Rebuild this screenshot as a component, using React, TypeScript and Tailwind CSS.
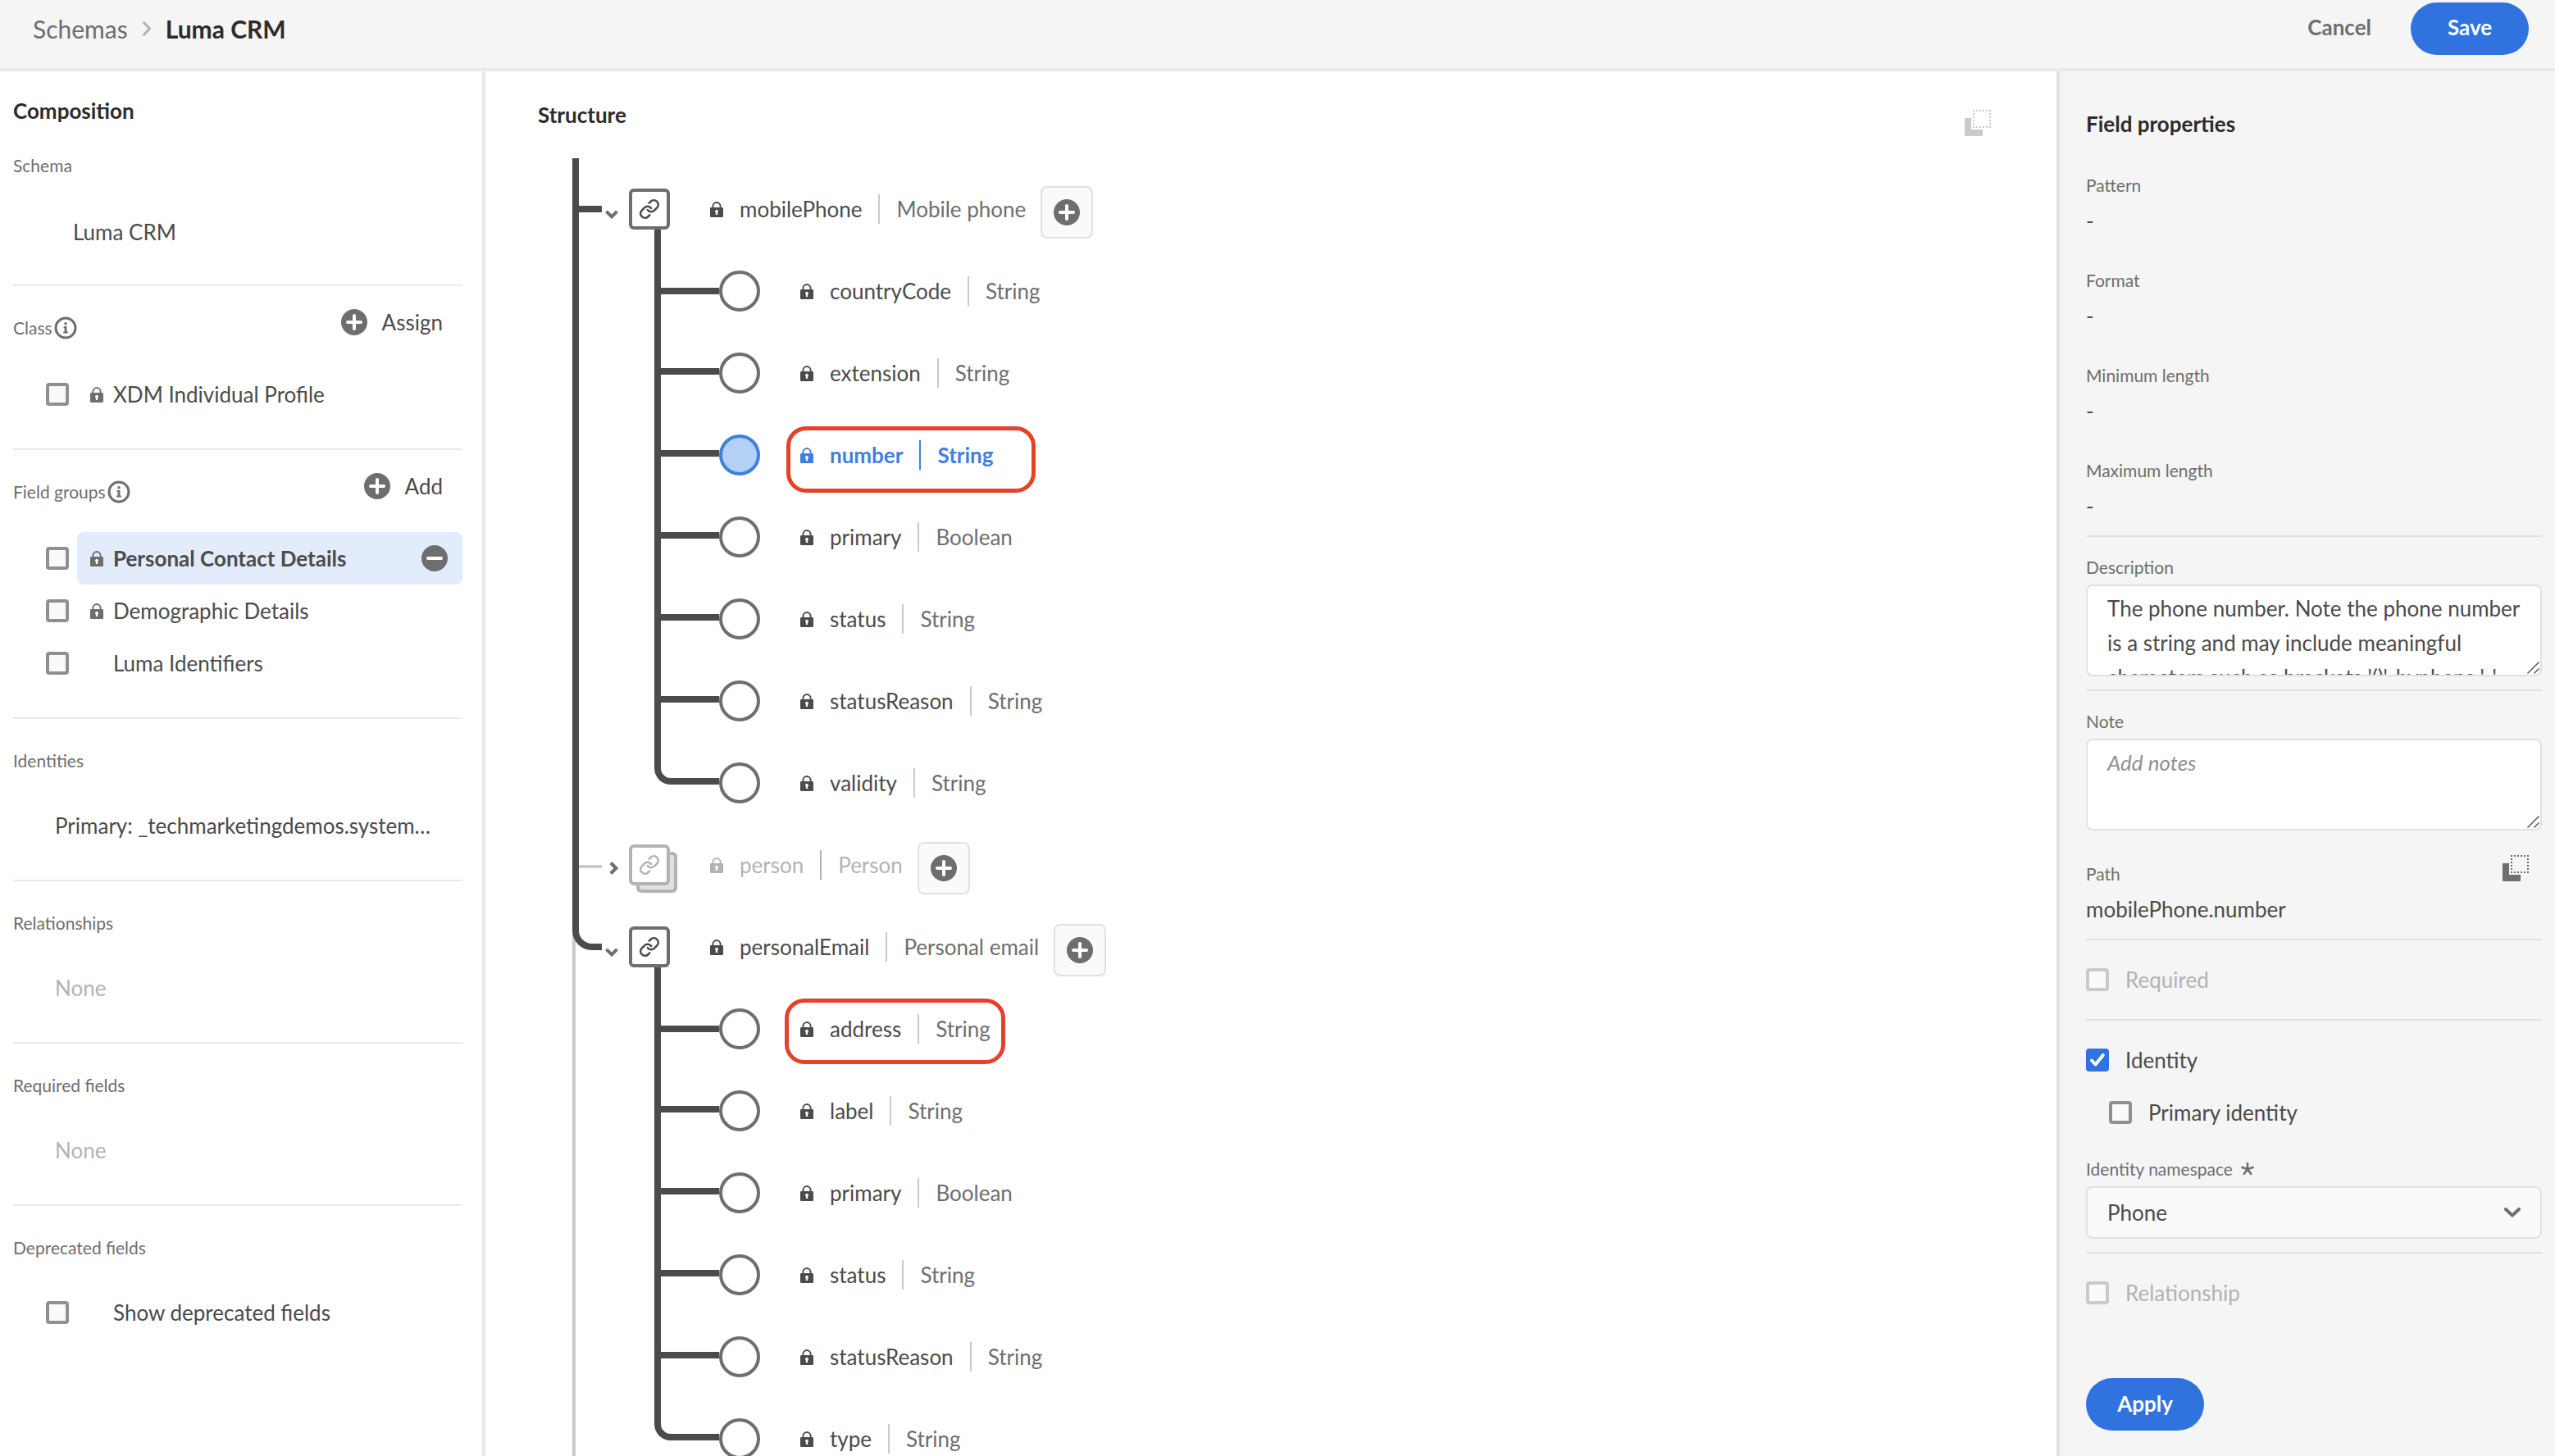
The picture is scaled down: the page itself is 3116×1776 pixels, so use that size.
import { useState, type ReactNode } from "react";
import { Link as LinkIcon } from "lucide-react";

/* ---------- icons ---------- */

function LockIcon({ className }: { className?: string }) {
  return (
    <svg aria-hidden="true" viewBox="0 0 16 19" className={`h-[19px] w-4 shrink-0 ${className ?? ""}`}>
      <path d="M3.4 8.5V5.6a4.6 4.6 0 0 1 9.2 0v2.9" fill="none" stroke="currentColor" strokeWidth="1.9" />
      <rect x="0" y="7" width="16" height="12" rx="1.2" fill="currentColor" />
      <path d="M8 9.8a2 2 0 0 1 1.1 3.6v2.7H6.9v-2.7A2 2 0 0 1 8 9.8Z" fill="#fff" />
    </svg>
  );
}

function PlusCircle() {
  return (
    <svg aria-hidden="true" viewBox="0 0 32 32" className="size-8 shrink-0">
      <circle cx="16" cy="16" r="16" fill="#6e6e6e" />
      <path d="M16 8v16M8 16h16" stroke="#fff" strokeWidth="4" strokeLinecap="round" />
    </svg>
  );
}

function MinusCircle() {
  return (
    <svg aria-hidden="true" viewBox="0 0 32 32" className="size-8 shrink-0">
      <circle cx="16" cy="16" r="16" fill="#6e6e6e" />
      <path d="M8 16h16" stroke="#fff" strokeWidth="4" strokeLinecap="round" />
    </svg>
  );
}

function InfoIcon() {
  return (
    <svg aria-hidden="true" viewBox="0 0 28 28" className="size-7 shrink-0">
      <circle cx="14" cy="14" r="12" fill="none" stroke="#6e6e6e" strokeWidth="3" />
      <circle cx="14" cy="8.8" r="1.7" fill="#6e6e6e" />
      <path d="M11.6 12h3.8v6.4h1.4v2h-5.6v-2h1.4V14h-1Z" fill="#6e6e6e" />
    </svg>
  );
}

function CopyIcon() {
  return (
    <svg aria-hidden="true" viewBox="0 0 32 32" className="size-8">
      <path d="M1 10h7v14h14v7a1 1 0 0 1-1 1H1a1 1 0 0 1-1-1V11a1 1 0 0 1 1-1Z" fill="currentColor" />
      <path
        d="M10 1h22M10 21h22M11 0v22M31 0v22"
        fill="none"
        stroke="currentColor"
        strokeWidth="2"
        strokeDasharray="2 2"
      />
    </svg>
  );
}

function ChevronSmall({ open }: { open: boolean }) {
  return open ? (
    <svg aria-hidden="true" viewBox="0 0 16 11" className="h-[11px] w-4">
      <path d="M1.5 1.8 8 8.3l6.5-6.5" fill="none" stroke="#6e6e6e" strokeWidth="4" />
    </svg>
  ) : (
    <svg aria-hidden="true" viewBox="0 0 11 16" className="h-4 w-[11px]">
      <path d="M1.8 1.5 8.3 8l-6.5 6.5" fill="none" stroke="#6e6e6e" strokeWidth="4" />
    </svg>
  );
}

function Asterisk() {
  return (
    <svg aria-hidden="true" viewBox="0 0 16 16" className="size-4">
      <path
        d="M8 8V1M8 8 1.4 5.9M8 8l6.6-2.1M8 8l-4.1 5.8M8 8l4.1 5.8"
        stroke="#6e6e6e"
        strokeWidth="2.6"
        strokeLinecap="round"
      />
    </svg>
  );
}

/* ---------- shared controls ---------- */

function Checkbox({
  label,
  defaultChecked = false,
  disabled = false,
}: {
  label?: string;
  defaultChecked?: boolean;
  disabled?: boolean;
}) {
  return (
    <span className="grid size-7 shrink-0">
      <input
        type="checkbox"
        aria-label={label}
        defaultChecked={defaultChecked}
        disabled={disabled}
        className="peer col-start-1 row-start-1 size-7 appearance-none rounded border-4 border-[#909090] bg-[#fafafa] checked:border-[#3073de] checked:bg-[#3073de] disabled:border-[#cacaca]"
      />
      <svg
        aria-hidden="true"
        viewBox="0 0 28 28"
        className="pointer-events-none col-start-1 row-start-1 hidden size-7 peer-checked:block"
      >
        <path d="m7 14.5 4.6 5L20.8 8" fill="none" stroke="#fff" strokeWidth="4" strokeLinecap="round" strokeLinejoin="round" />
      </svg>
    </span>
  );
}

/* ---------- composition panel ---------- */

function Section({
  title,
  info,
  action,
  first,
  children,
}: {
  title: string;
  info?: boolean;
  action?: string;
  first?: boolean;
  children: ReactNode;
}) {
  return (
    <section className={first ? "pb-8" : "border-t-2 border-[#eaeaea] pb-[34px]"}>
      <div
        className={
          action || first ? "flex h-[100px] items-start justify-between" : "flex h-[98px] items-start"
        }
      >
        <h3 className="flex items-center gap-0.5 pt-[35px] text-[21px] leading-8 text-[#6e6e6e]">
          {title}
          {info && (
            <button type="button" aria-label={`About ${title}`}>
              <InfoIcon />
            </button>
          )}
        </h3>
        {action && (
          <button type="button" className="mt-3 flex h-16 items-center gap-[18px] pr-6 text-[#4b4b4b]">
            <PlusCircle />
            {action}
          </button>
        )}
      </div>
      {children}
    </section>
  );
}

function CheckRow({ name, locked, selected }: { name: string; locked?: boolean; selected?: boolean }) {
  return (
    <li className="flex h-16 items-center gap-[10px] pl-10">
      <Checkbox label={name} />
      <div
        className={
          selected
            ? "flex h-16 flex-1 items-center gap-3 rounded-lg bg-[#e3ecfb] pr-[18px] pl-4 font-bold"
            : "flex h-16 flex-1 items-center gap-3 pl-4"
        }
      >
        {locked ? <LockIcon className="text-[#6e6e6e]" /> : <span className="w-4" />}
        <span className="flex-1">{name}</span>
        {selected && (
          <button type="button" aria-label={`Remove ${name}`}>
            <MinusCircle />
          </button>
        )}
      </div>
    </li>
  );
}

function CompositionPanel() {
  return (
    <aside className="w-[592px] shrink-0 border-r-4 border-[#eaeaea] bg-white pr-6 pl-4 text-[#4b4b4b]">
      <h2 className="h-16 pt-8 leading-8 font-bold text-[#2c2c2c]">Composition</h2>
      <Section title="Schema" first>
        <p className="flex h-16 items-center pl-[73px]">Luma CRM</p>
      </Section>
      <Section title="Class" info action="Assign">
        <ul>
          <CheckRow name="XDM Individual Profile" locked />
        </ul>
      </Section>
      <Section title="Field groups" info action="Add">
        <ul>
          <CheckRow name="Personal Contact Details" locked selected />
          <CheckRow name="Demographic Details" locked />
          <CheckRow name="Luma Identifiers" />
        </ul>
      </Section>
      <Section title="Identities">
        <p className="flex h-16 items-center pl-[51px]">Primary: _techmarketingdemos.system…</p>
      </Section>
      <Section title="Relationships">
        <p className="flex h-16 items-center pl-[51px] text-[#b3b3b3]">None</p>
      </Section>
      <Section title="Required fields">
        <p className="flex h-16 items-center pl-[51px] text-[#b3b3b3]">None</p>
      </Section>
      <Section title="Deprecated fields">
        <ul>
          <CheckRow name="Show deprecated fields" />
        </ul>
      </Section>
    </aside>
  );
}

/* ---------- structure tree ---------- */

type Field = { name: string; type: string; selected?: boolean; outline?: string };
type Group = { name: string; type: string; dimmed?: boolean; last?: boolean; fields: Field[] };

const groups: Group[] = [
  {
    name: "mobilePhone",
    type: "Mobile phone",
    fields: [
      { name: "countryCode", type: "String" },
      { name: "extension", type: "String" },
      {
        name: "number",
        type: "String",
        selected: true,
        outline: "-top-[17px] -left-[17px] h-[81px] w-[304px]",
      },
      { name: "primary", type: "Boolean" },
      { name: "status", type: "String" },
      { name: "statusReason", type: "String" },
      { name: "validity", type: "String" },
    ],
  },
  { name: "person", type: "Person", dimmed: true, fields: [] },
  {
    name: "personalEmail",
    type: "Personal email",
    last: true,
    fields: [
      { name: "address", type: "String", outline: "-top-[19px] -left-[19px] h-20 w-[269px]" },
      { name: "label", type: "String" },
      { name: "primary", type: "Boolean" },
      { name: "status", type: "String" },
      { name: "statusReason", type: "String" },
      { name: "type", type: "String" },
    ],
  },
];

function FieldRow({ field, first, last }: { field: Field; first: boolean; last: boolean }) {
  return (
    <li className="flex h-[100px] items-center">
      <div className="flex w-[79px] flex-col self-stretch">
        <div
          className={
            first
              ? "h-[54px] border-b-8 border-l-8 border-[#4b4b4b]"
              : last
                ? "h-[52px] rounded-bl-[20px] border-b-8 border-l-8 border-[#4b4b4b]"
                : "h-[52px] border-b-8 border-l-8 border-[#4b4b4b]"
          }
        />
        {!last && <div className="w-2 flex-1 bg-[#4b4b4b]" />}
      </div>
      <button
        type="button"
        aria-label={`Select ${field.name}`}
        className={
          field.selected
            ? "size-[50px] rounded-full border-4 border-[#3f7fe0] bg-[#b5d0f5]"
            : "size-[50px] rounded-full border-4 border-[#6e6e6e] bg-white"
        }
      />
      <div
        className={
          field.selected
            ? "relative ml-[49px] flex h-9 items-center font-bold text-[#3f7fe0]"
            : "relative ml-[49px] flex h-9 items-center text-[#4b4b4b]"
        }
      >
        <LockIcon />
        <span className="pl-5">{field.name}</span>
        <span className={field.selected ? "ml-5 h-9 w-0.5 bg-[#3f7fe0]" : "ml-5 h-9 w-0.5 bg-[#cacaca]"} />
        <span className={field.selected ? "pl-5" : "pl-5 text-[#6e6e6e]"}>{field.type}</span>
        {field.outline && (
          <span
            className={`pointer-events-none absolute rounded-[24px] border-[5px] border-[#e34328] ${field.outline}`}
          />
        )}
      </div>
    </li>
  );
}

function GroupNode({ group }: { group: Group }) {
  const { name, type, dimmed, last, fields } = group;
  const open = fields.length > 0;
  return (
    <li className="flex">
      <div className={last ? "w-9 shrink-0 border-l-4 border-[#cacaca]" : "flex w-9 shrink-0 flex-col"}>
        {dimmed ? (
          <div className="flex h-[100px] border-l-8 border-[#4b4b4b]">
            <div className="h-[54px] flex-1 border-b-4 border-[#cacaca]" />
          </div>
        ) : (
          <div
            className={
              last
                ? "-ml-1 h-[54px] rounded-bl-[24px] border-b-8 border-l-8 border-[#4b4b4b]"
                : "h-[54px] border-b-8 border-l-8 border-[#4b4b4b]"
            }
          />
        )}
        {!dimmed && !last && <div className="w-2 flex-1 bg-[#4b4b4b]" />}
      </div>
      <div>
        <div className="flex h-[100px] items-center">
          <button
            type="button"
            aria-expanded={open}
            aria-label={`Toggle ${name}`}
            className={open ? "mt-3 w-[33px] pl-1" : "mt-2 w-[33px] pl-[9px]"}
          >
            <ChevronSmall open={open} />
          </button>
          <div className="flex h-[100px] flex-col pt-[25px]">
            <div
              className={
                dimmed
                  ? "grid size-[50px] shrink-0 place-items-center rounded-md border-4 border-[#b3b3b3] bg-white text-[#b3b3b3] shadow-[9px_9px_0_-4px_#e1e1e1,9px_9px_0_0_#b3b3b3]"
                  : "grid size-[50px] shrink-0 place-items-center rounded-md border-4 border-[#6e6e6e] bg-white text-[#4b4b4b]"
              }
            >
              <LinkIcon size={26} strokeWidth={2.4} />
            </div>
            {open && <div className="ml-[31px] w-2 flex-1 bg-[#4b4b4b]" />}
          </div>
          <div
            className={
              dimmed
                ? "ml-[49px] flex items-center text-[#b3b3b3]"
                : "ml-[49px] flex items-center text-[#4b4b4b]"
            }
          >
            <LockIcon />
            <span className="pl-5">{name}</span>
            <span className={dimmed ? "ml-5 h-9 w-0.5 bg-[#b3b3b3]" : "ml-5 h-9 w-0.5 bg-[#cacaca]"} />
            <span className={dimmed ? "pl-5" : "pl-5 text-[#6e6e6e]"}>{type}</span>
          </div>
          <button
            type="button"
            aria-label={`Add field to ${name}`}
            className="mt-2 ml-[18px] grid size-16 place-items-center rounded-lg border-2 border-[#e1e1e1] bg-[#fafafa]"
          >
            <PlusCircle />
          </button>
        </div>
        {open && (
          <ul className="ml-16">
            {fields.map((f, i) => (
              <FieldRow key={f.name} field={f} first={i === 0} last={i === fields.length - 1} />
            ))}
          </ul>
        )}
      </div>
    </li>
  );
}

function StructurePanel() {
  return (
    <main className="min-w-0 flex-1 overflow-hidden bg-white">
      <div className="flex h-[106px] items-center justify-between pr-20 pl-16">
        <h2 className="leading-8 font-bold text-[#2c2c2c]">Structure</h2>
        <button type="button" aria-label="Copy structure" disabled className="pt-5 text-[#cacaca]">
          <CopyIcon />
        </button>
      </div>
      <div className="pl-[106px]">
        <div className="h-3 w-2 bg-[#4b4b4b]" />
        <ul>
          {groups.map((g) => (
            <GroupNode key={g.name} group={g} />
          ))}
        </ul>
      </div>
    </main>
  );
}

/* ---------- field properties panel ---------- */

const readOnly = ["Pattern", "Format", "Minimum length", "Maximum length"];

const labelClass = "block text-[21px] leading-[34px] text-[#6e6e6e]";

function Rule({ className }: { className?: string }) {
  return <hr className={`border-t-2 border-[#e1e1e1] ${className ?? ""}`} />;
}

function TextArea({ id, value, placeholder }: { id: string; value?: string; placeholder?: string }) {
  return (
    <div className="relative mt-1">
      <textarea
        id={id}
        defaultValue={value}
        placeholder={placeholder}
        className="block h-28 w-full resize-none overflow-hidden rounded-lg border-2 border-[#e1e1e1] bg-white py-1.5 pr-5 pl-6 leading-[42px] text-[#4b4b4b] placeholder:text-[#909090] placeholder:italic"
      />
      <svg
        aria-hidden="true"
        viewBox="0 0 15 15"
        className="pointer-events-none absolute right-[3px] bottom-[3px] size-[15px]"
      >
        <path d="M.5 14.5 14.5.5M8.5 14.5l6-6" fill="none" stroke="#4b4b4b" strokeWidth="1.4" />
      </svg>
    </div>
  );
}

function PropertiesPanel() {
  const [namespace, setNamespace] = useState("Phone");
  return (
    <aside className="w-[608px] shrink-0 border-l-4 border-[#e1e1e1] bg-[#f5f5f5] pt-12 pr-4 pl-8 text-[#4b4b4b]">
      <h2 className="leading-8 font-bold text-[#2c2c2c]">Field properties</h2>
      <dl className="mt-[42px] flex flex-col gap-[30px]">
        {readOnly.map((l) => (
          <div key={l}>
            <dt className={labelClass}>{l}</dt>
            <dd className="leading-[52px]">-</dd>
          </div>
        ))}
      </dl>
      <Rule className="mt-2.5 mb-5" />
      <label htmlFor="description" className={labelClass}>
        Description
      </label>
      <TextArea
        id="description"
        value="The phone number. Note the phone number is a string and may include meaningful characters such as brackets '()', hyphens '-', or symbols like '+'."
      />
      <Rule className="mt-4 mb-5" />
      <label htmlFor="note" className={labelClass}>
        Note
      </label>
      <TextArea id="note" placeholder="Add notes" />
      <div className="mt-9 flex items-start justify-between pr-4">
        <div>
          <p className={labelClass}>Path</p>
          <p className="leading-[52px]">mobilePhone.number</p>
        </div>
        <button type="button" aria-label="Copy path" className="-mt-1.5 text-[#6e6e6e]">
          <CopyIcon />
        </button>
      </div>
      <Rule className="mt-2.5 mb-4" />
      <label className="flex h-16 items-center gap-5 text-[#b3b3b3]">
        <Checkbox disabled />
        Required
      </label>
      <Rule className="my-4" />
      <label className="flex h-16 items-center gap-5">
        <Checkbox defaultChecked />
        Identity
      </label>
      <label className="ml-7 flex h-16 items-center gap-5">
        <Checkbox />
        Primary identity
      </label>
      <label htmlFor="namespace" className="mt-5 flex items-center gap-2.5 text-[21px] leading-[34px] text-[#6e6e6e]">
        Identity namespace
        <Asterisk />
      </label>
      <div className="relative mt-1">
        <select
          id="namespace"
          value={namespace}
          onChange={(e) => setNamespace(e.target.value)}
          className="h-16 w-full appearance-none rounded-lg border-2 border-[#e1e1e1] bg-[#fafafa] pl-6 text-[#4b4b4b]"
        >
          <option>Phone</option>
          <option>Email</option>
        </select>
        <svg
          aria-hidden="true"
          viewBox="0 0 20 12"
          className="pointer-events-none absolute top-[26px] right-[26px] h-3 w-5"
        >
          <path d="m2 2 8 7.6L18 2" fill="none" stroke="#6e6e6e" strokeWidth="4" strokeLinecap="round" strokeLinejoin="round" />
        </svg>
      </div>
      <Rule className="my-4" />
      <label className="flex h-16 items-center gap-5 text-[#b3b3b3]">
        <Checkbox disabled />
        Relationship
      </label>
      <button type="button" className="mt-[72px] h-16 w-36 rounded-full bg-[#3073de] pb-0.5 font-bold text-white">
        Apply
      </button>
    </aside>
  );
}

export default function App() {
  return (
    <div className="flex h-screen flex-col overflow-hidden bg-white font-['Lato',sans-serif] text-[26px]">
      <header className="flex h-[87px] shrink-0 items-center justify-between border-b-4 border-[#eaeaea] bg-[#f5f5f5] pr-8 pb-[14px] pl-10">
        <nav aria-label="Breadcrumb" className="flex items-center gap-[17px] text-[30px] leading-9">
          <a href="#schemas" className="text-[#6e6e6e]">
            Schemas
          </a>
          <svg aria-hidden="true" viewBox="0 0 12 20" className="h-5 w-3">
            <path d="m2.5 2.5 7 7.5-7 7.5" fill="none" stroke="#b3b3b3" strokeWidth="3" strokeLinecap="round" strokeLinejoin="round" />
          </svg>
          <span className="font-bold text-[#2c2c2c]">Luma CRM</span>
        </nav>
        <div className="flex items-center gap-12">
          <button type="button" className="pb-0.5 font-bold text-[#6e6e6e]">
            Cancel
          </button>
          <button type="button" className="h-16 w-36 rounded-full bg-[#3073de] pb-0.5 font-bold text-white">
            Save
          </button>
        </div>
      </header>
      <div className="flex min-h-0 flex-1">
        <CompositionPanel />
        <StructurePanel />
        <PropertiesPanel />
      </div>
    </div>
  );
}
